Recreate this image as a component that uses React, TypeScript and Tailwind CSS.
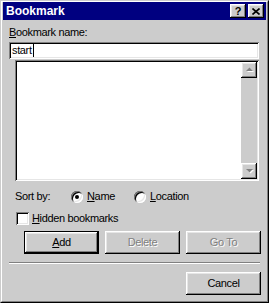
import React from 'react';

const raised =
  'shadow-[inset_-1px_-1px_0_#000,inset_1px_1px_0_#fff,inset_-2px_-2px_0_#808080,inset_2px_2px_0_#e6e6e6]';
const sunken =
  'shadow-[inset_1px_1px_0_#808080,inset_-1px_-1px_0_#fff,inset_2px_2px_0_#000,inset_-2px_-2px_0_#e6e6e6]';

const CaptionButton = ({ children, className = '' }: { children: React.ReactNode; className?: string }) => (
  <div className={`w-4 h-[14px] bg-[#cccccc] flex items-center justify-center ${raised} ${className}`}>
    {children}
  </div>
);

const Arrow = ({ down = false }: { down?: boolean }) => (
  <svg width="9" height="6" viewBox="0 0 9 6" className="block">
    {down ? (
      <>
        <path d="M2 2h7l-3.5 3.5z" fill="#fff" />
        <path d="M1 1h7l-3.5 3.5z" fill="#808080" />
      </>
    ) : (
      <>
        <path d="M2 5h7l-3.5-3.5z" fill="#fff" />
        <path d="M1 4h7l-3.5-3.5z" fill="#808080" />
      </>
    )}
  </svg>
);

const Radio = ({ checked }: { checked?: boolean }) => (
  <div className={`w-3 h-3 rounded-full bg-white flex items-center justify-center ${sunken}`}>
    {checked && <div className="w-1 h-1 rounded-full bg-black" />}
  </div>
);

const Button = ({
  label,
  disabled,
  isDefault,
  className = '',
}: {
  label: React.ReactNode;
  disabled?: boolean;
  isDefault?: boolean;
  className?: string;
}) => (
  <div className={`w-[75px] h-[23px] ${isDefault ? 'border border-black' : ''} ${className}`}>
    <div
      className={`w-full h-full bg-[#cccccc] flex items-center justify-center ${raised} ${
        disabled ? 'text-[#808080] [text-shadow:1px_1px_0_#fff]' : 'text-black'
      }`}
    >
      {label}
    </div>
  </div>
);

export default function App() {
  return (
    <div className="w-[269px] h-[303px] bg-[#cccccc] border border-t-[#cccccc] border-l-[#cccccc] border-r-black border-b-black font-['Liberation_Sans',Arial,sans-serif] text-[11px] leading-[13px] tracking-[-0.35px] text-black select-none">
      <div className="h-full border border-t-white border-l-white border-r-[#808080] border-b-[#808080] px-px pb-px flex flex-col">
        {/* Title bar */}
        <div className="h-[18px] bg-[#000080] flex items-center pl-[3px] pr-[2px]">
          <span className="flex-1 text-white font-bold text-[12px] tracking-normal">Bookmark</span>
          <CaptionButton>
            <span className="font-bold text-[11px] leading-none tracking-normal">?</span>
          </CaptionButton>
          <CaptionButton className="ml-[2px]">
            <svg width="8" height="7" viewBox="0 0 8 7">
              <path d="M0.5 0.5L7.5 6.5M7.5 0.5L0.5 6.5" stroke="#000" strokeWidth="1.6" />
            </svg>
          </CaptionButton>
        </div>

        {/* Body */}
        <div className="flex-1 flex flex-col pl-[6px]">
          <div className="mt-[6px]">
            <span className="underline">B</span>ookmark name:
          </div>
          <div className={`mt-[3px] w-[250px] h-[17px] bg-white flex items-center pl-[3px] ${sunken}`}>
            <span>start</span>
            <span className="w-px h-[13px] bg-black ml-px" />
          </div>

          {/* List box */}
          <div className={`mt-px ml-[6px] w-[244px] h-[121px] bg-white flex justify-end p-[2px] ${sunken}`}>
            <div className="w-4 h-full bg-[#cccccc] flex flex-col justify-between">
              <div className={`w-4 h-4 flex items-center justify-center ${raised}`}>
                <Arrow />
              </div>
              <div className={`w-4 h-4 flex items-center justify-center ${raised}`}>
                <Arrow down />
              </div>
            </div>
          </div>

          {/* Sort by */}
          <div className="mt-[9px] ml-[6px] flex items-center h-[13px]">
            <span className="w-[56px]">Sort by:</span>
            <Radio checked />
            <span className="ml-[4px] w-[47px]">
              <span className="underline">N</span>ame
            </span>
            <Radio />
            <span className="ml-[4px]">
              <span className="underline">L</span>ocation
            </span>
          </div>

          {/* Hidden bookmarks */}
          <div className="mt-[9px] ml-[7px] flex items-center h-[13px]">
            <div className={`w-[13px] h-[13px] bg-white ${sunken}`} />
            <span className="ml-[3px]">
              <span className="underline">H</span>idden bookmarks
            </span>
          </div>

          {/* Buttons */}
          <div className="mt-[6px] ml-[15px] flex gap-[6px]">
            <Button
              isDefault
              label={
                <span>
                  <span className="underline">A</span>dd
                </span>
              }
            />
            <Button disabled label="Delete" />
            <Button disabled label="Go To" />
          </div>

          <div className="mt-[8px] w-[251px] h-[2px] border-t border-t-[#808080] border-b border-b-white" />

          <div className="mt-[8px] ml-[177px]">
            <Button label="Cancel" />
          </div>
        </div>
      </div>
    </div>
  );
}
